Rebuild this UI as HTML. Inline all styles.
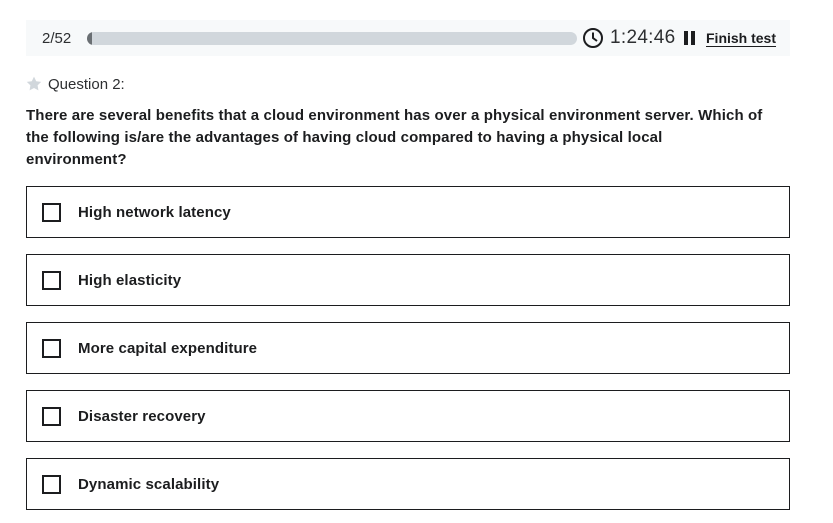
<!DOCTYPE html>
<html><head><meta charset="utf-8"><style>
*{margin:0;padding:0;box-sizing:border-box}
body{width:833px;height:523px;background:#fff;font-family:"Liberation Sans",sans-serif;color:#1c1d1f;position:relative;overflow:hidden}
.hdr{position:absolute;left:26px;top:20px;width:764px;height:36px;background:#f7f9fa}
.cnt{position:absolute;left:16px;top:10px;font-size:15px;color:#2d2f31}
.bar{position:absolute;left:61px;top:12px;width:490px;height:13px;background:#d1d7dc;border-radius:7px;overflow:hidden}
.bar i{position:absolute;left:0;top:0;width:5px;height:13px;background:#6a6f73;border-radius:7px 0 0 7px}
.clock{position:absolute;left:556px;top:7px}
.time{position:absolute;left:584px;top:7px;font-size:19px;color:#2d2f31;letter-spacing:0.3px}
.pause{position:absolute;left:658px;top:11px;width:11px;height:14px}
.pause:before,.pause:after{content:"";position:absolute;top:0;width:4px;height:14px;background:#1c1d1f}
.pause:before{left:0}.pause:after{left:7px}
.fin{position:absolute;left:680px;top:10px;font-size:14px;font-weight:bold;text-decoration:underline;text-underline-offset:3px}
.q{position:absolute;left:26px;top:76px;font-size:15px;color:#2d2f31}
.q svg{vertical-align:-2px;margin-right:6px}
.qt{position:absolute;left:26px;top:105px;width:800px;font-size:15px;font-weight:bold;line-height:22px;letter-spacing:0.12px;white-space:nowrap}
.opt{position:absolute;left:26px;width:764px;height:52px;border:1px solid #1c1d1f}
.opt b{position:absolute;left:15px;top:16px;width:19px;height:19px;border:2px solid #1c1d1f}
.opt span{position:absolute;left:51px;top:17px;font-size:15px;font-weight:bold;letter-spacing:0.1px}
</style></head><body>
<div class="hdr">
<div class="cnt">2/52</div>
<div class="bar"><i></i></div>
<svg class="clock" width="22" height="22" viewBox="0 0 22 22"><circle cx="11" cy="11" r="9" fill="none" stroke="#1c1d1f" stroke-width="2"/><path d="M11 5.5V11l4 3" fill="none" stroke="#1c1d1f" stroke-width="2"/></svg>
<div class="time">1:24:46</div>
<div class="pause"></div>
<div class="fin">Finish test</div>
</div>
<div class="q"><svg width="16" height="15" viewBox="0 0 24 23"><path d="M12 1l3.4 7 7.6 1-5.5 5.3 1.3 7.7L12 18.4 5.2 22l1.3-7.7L1 9l7.6-1z" fill="#d1d7dc"/></svg>Question 2:</div>
<div class="qt">There are several benefits that a cloud environment has over a physical environment server. Which of<br>the following is/are the advantages of having cloud compared to having a physical local<br>environment?</div>
<div class="opt" style="top:186px"><b></b><span>High network latency</span></div>
<div class="opt" style="top:254px"><b></b><span>High elasticity</span></div>
<div class="opt" style="top:322px"><b></b><span>More capital expenditure</span></div>
<div class="opt" style="top:390px"><b></b><span>Disaster recovery</span></div>
<div class="opt" style="top:458px"><b></b><span>Dynamic scalability</span></div>
</body></html>
